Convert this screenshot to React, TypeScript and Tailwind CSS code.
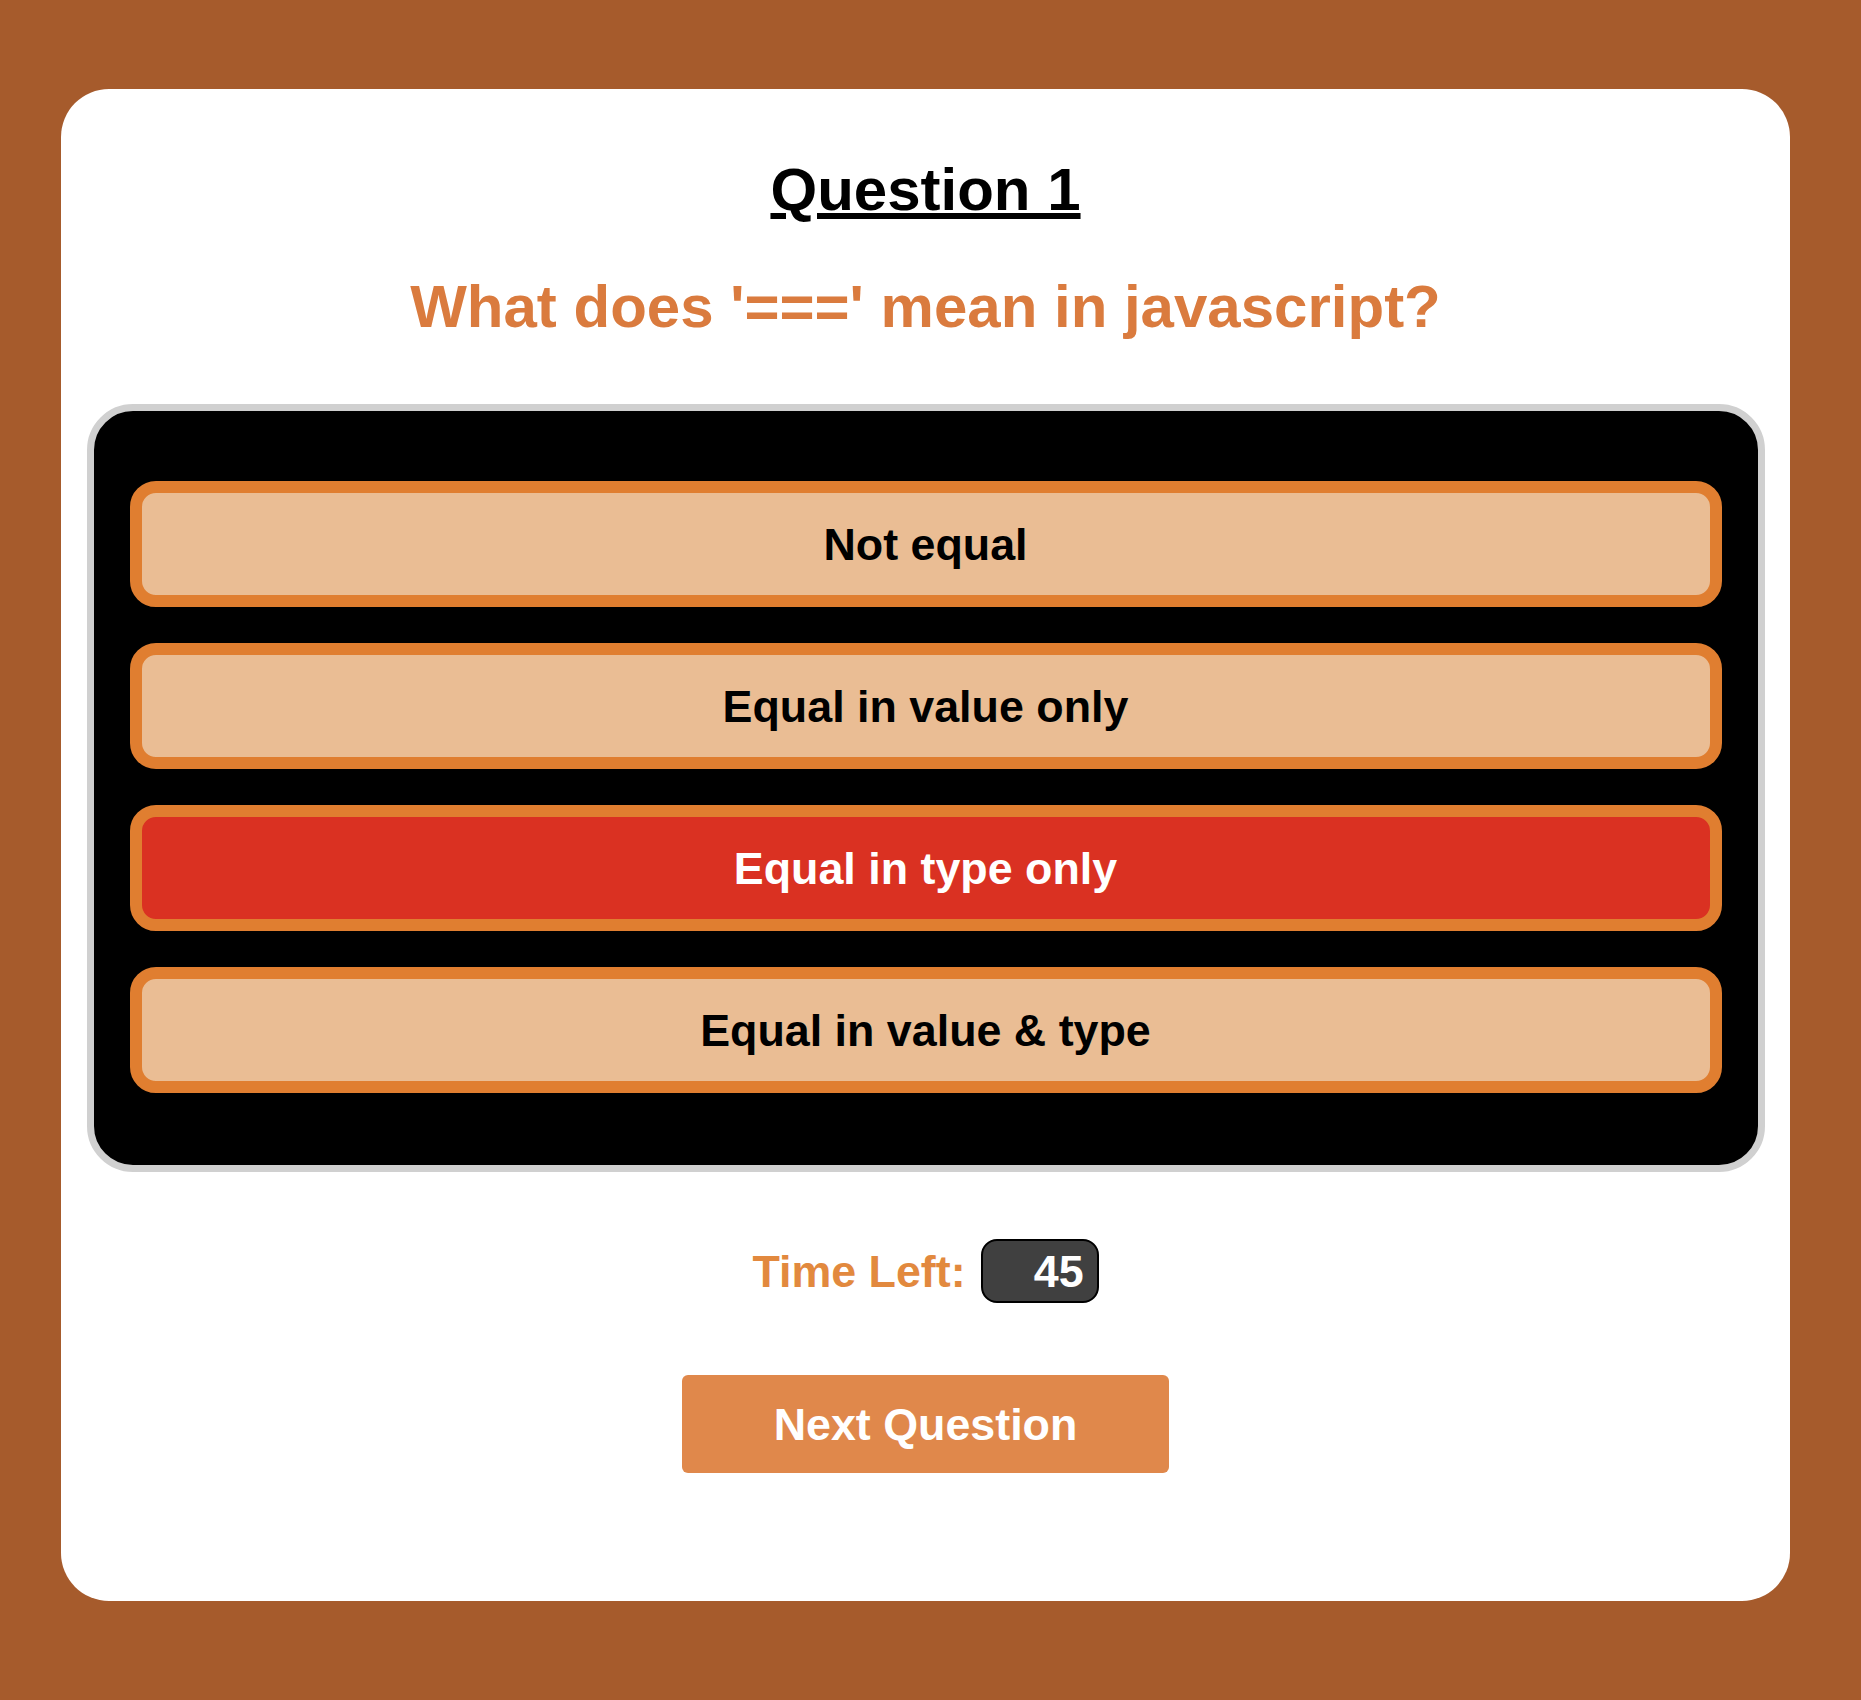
const options = [
  { label: 'Not equal', wrong: false },
  { label: 'Equal in value only', wrong: false },
  { label: 'Equal in type only', wrong: true },
  { label: 'Equal in value & type', wrong: false },
];

export default function App() {
  return (
    <div className="min-h-[1700px] w-full bg-[#a65b2c] pt-[89px] font-['Liberation_Sans',Arial,sans-serif]">
      <div className="ml-[61px] flex h-[1512px] w-[1729px] flex-col items-center rounded-[48px] bg-white px-[25px] pt-[66px]">
        <h1 className="text-[60px] leading-[69px] font-bold text-black underline decoration-[6px] underline-offset-[3px]">
          Question 1
        </h1>
        <h2 className="mt-[48px] text-[60px] leading-[69px] font-bold text-[#da7b3e]">
          What does '===' mean in javascript?
        </h2>

        {/* answers */}
        <div className="mt-[63px] flex w-[1678px] flex-col gap-[36px] rounded-[46px] border-[7px] border-[#d0d0d0] bg-black px-[36px] pt-[70px] pb-[72px]">
          {options.map((opt) => (
            <button
              key={opt.label}
              className={
                opt.wrong
                  ? 'flex h-[126px] w-full items-center justify-center rounded-[26px] border-[12px] border-[#e07e30] bg-[#da3122] text-[44.8px] leading-[51px] font-bold text-white'
                  : 'flex h-[126px] w-full items-center justify-center rounded-[26px] border-[12px] border-[#e07e30] bg-[#eabd94] text-[44.8px] leading-[51px] font-bold text-black'
              }
            >
              {opt.label}
            </button>
          ))}
        </div>

        <div className="mt-[67px] flex items-center gap-[15px]">
          <span className="text-[44.8px] leading-[51px] font-bold text-[#e2893e]">Time Left:</span>
          <div className="flex h-[64px] w-[118px] items-center justify-end rounded-[16px] border-2 border-black bg-[#404040] pr-[13px] text-[44.8px] leading-[51px] font-bold text-white">
            45
          </div>
        </div>

        <button className="mt-[72px] flex h-[98px] w-[487px] items-center justify-center rounded-[6px] bg-[#e0884b] text-[44.8px] leading-[51px] font-bold text-white">
          Next Question
        </button>
      </div>
    </div>
  );
}
